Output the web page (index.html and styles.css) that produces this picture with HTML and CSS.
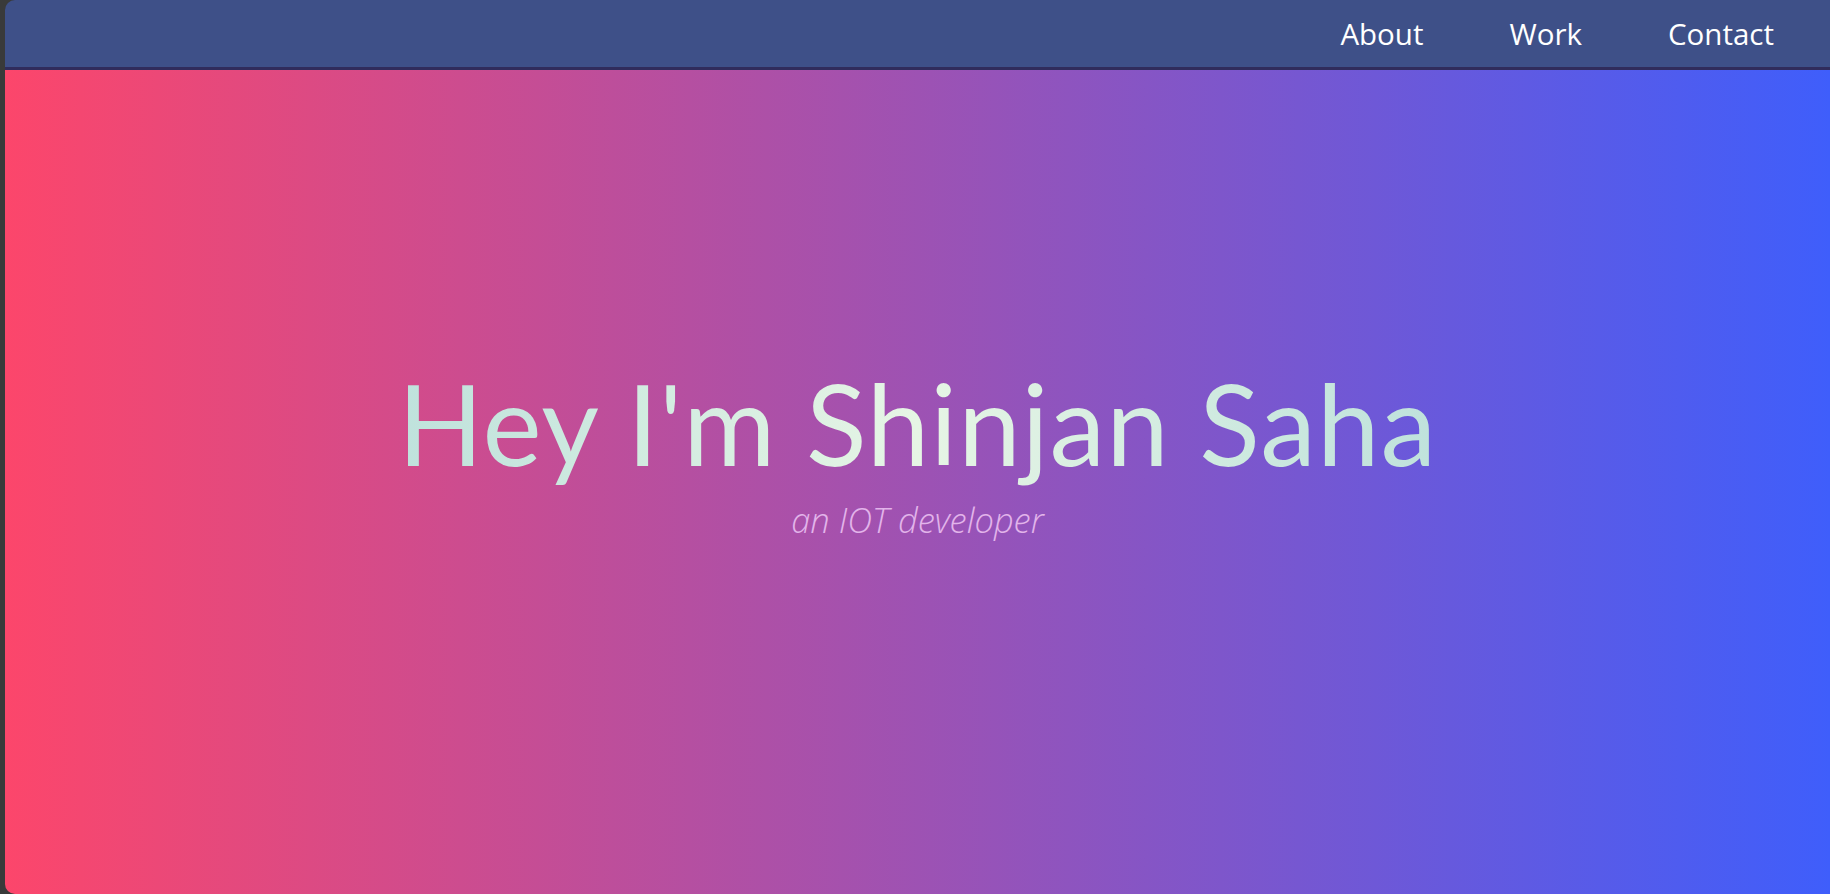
FILE: index.html
```html
<!DOCTYPE html>
<html lang="en">
<head>
<meta charset="utf-8">
<title>Shinjan Saha</title>
<link rel="stylesheet" href="styles.css">
</head>
<body>
<div class="page">
  <nav class="nav">
    <a class="nav-link" href="#about">About</a>
    <a class="nav-link" href="#work">Work</a>
    <a class="nav-link" href="#contact">Contact</a>
  </nav>
  <header class="hero">
    <h1 class="title">Hey I'm Shinjan Saha</h1>
    <p class="subtitle">an IOT developer</p>
  </header>
</div>
</body>
</html>
```

FILE: styles.css
```css
html, body {
  margin: 0;
  padding: 0;
  height: 100%;
}
body {
  background: #393a3a;
  font-family: "Lato", "Open Sans", sans-serif;
  overflow: hidden;
}
.page {
  margin-left: 5px;
  height: 894px;
  display: flex;
  flex-direction: column;
  border-radius: 10px 0 0 10px;
  overflow: hidden;
}
.nav {
  height: 67px;
  flex: none;
  background: #3e5088;
  border-bottom: 3px solid rgba(30, 0, 40, 0.45);
  display: flex;
  justify-content: flex-end;
  align-items: center;
  gap: 86px;
  padding-right: 56px;
}
.nav-link {
  color: #ffffff;
  text-decoration: none;
  font-family: "Open Sans", sans-serif;
  font-size: 29.5px;
  font-weight: 400;
  line-height: 1;
}
.hero {
  flex: 1;
  background: linear-gradient(90deg, #fc466b 0%, #3f5efb 100%);
  display: flex;
  flex-direction: column;
  align-items: center;
  justify-content: center;
  padding-bottom: 68px;
}
.title {
  margin: 0;
  font-family: "Lato", sans-serif;
  font-weight: 400;
  font-size: 112px;
  line-height: 1.2;
  letter-spacing: 1px;
  background: linear-gradient(90deg, #bfe2dc 0%, #e6f5e5 50%, #bfe2dc 100%);
  -webkit-background-clip: text;
  background-clip: text;
  color: transparent;
}
.subtitle {
  margin: 8px 0 0;
  font-family: "Open Sans", sans-serif;
  font-style: italic;
  font-weight: 300;
  font-size: 34.5px;
  line-height: 1.2;
  color: #e2b4ea;
}
```
